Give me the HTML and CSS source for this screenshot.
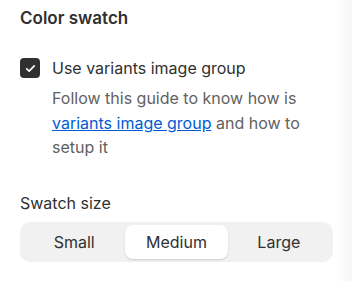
FILE: index.html
```html
<!DOCTYPE html>
<html lang="en">
<head>
  <meta charset="UTF-8">
  <meta name="viewport" content="width=device-width, initial-scale=1.0">
  <title>Color swatch</title>
  <link rel="stylesheet" href="styles.css">
</head>
<body>
  <div class="panel">
    <h2 class="title">Color swatch</h2>

    <label class="check-row">
      <span class="checkbox">
        <svg viewBox="0 0 20 20" width="15" height="15">
          <path d="M5 10.5l3.2 3L15 6.5" fill="none" stroke="#fff" stroke-width="2.2" stroke-linecap="round" stroke-linejoin="round"/>
        </svg>
      </span>
      <span class="check-label">Use variants image group</span>
    </label>
    <p class="help">Follow this guide to know how is <a href="#">variants image group</a> and how to setup it</p>

    <div class="field">
      <div class="field-label">Swatch size</div>
      <div class="segmented">
        <button class="seg">Small</button>
        <button class="seg active">Medium</button>
        <button class="seg">Large</button>
      </div>
    </div>
  </div>
</body>
</html>
```

FILE: styles.css
```css
body {
  margin: 0;
  font-family: 'Inter', 'Noto Sans', sans-serif;
  color: #303030;
  background: linear-gradient(to right, #fff 0, #fff 334px, #f7f7f7 352px);
}

.panel {
  width: 313px;
  padding: 8px 0 0 20px;
}

.title {
  margin: 0;
  font-size: 17px;
  font-weight: 600;
  line-height: 20px;
}

.check-row {
  display: flex;
  align-items: center;
  gap: 12px;
  margin-top: 30px;
}

.checkbox {
  width: 20px;
  height: 20px;
  border-radius: 4px;
  background: #303030;
  display: flex;
  align-items: center;
  justify-content: center;
}

.check-label {
  font-size: 16px;
  line-height: 20px;
}

.help {
  margin: 8px 0 0 32px;
  width: 260px;
  font-size: 16px;
  line-height: 24.5px;
  color: #616161;
}

.help a {
  color: #005bd3;
}

.field {
  margin-top: 33px;
}

.field-label {
  font-size: 16px;
  line-height: 20px;
  margin-bottom: 9px;
}

.segmented {
  display: grid;
  grid-template-columns: 1fr 1fr 1fr;
  height: 40px;
  box-sizing: border-box;
  padding: 3px;
  background: #f1f1f1;
  border-radius: 10px;
}

.seg {
  border: none;
  background: transparent;
  font-family: inherit;
  font-size: 16px;
  color: #303030;
  border-radius: 8px;
}

.seg.active {
  background: #fff;
  box-shadow: 0 1px 2px rgba(0, 0, 0, 0.15);
}
```
